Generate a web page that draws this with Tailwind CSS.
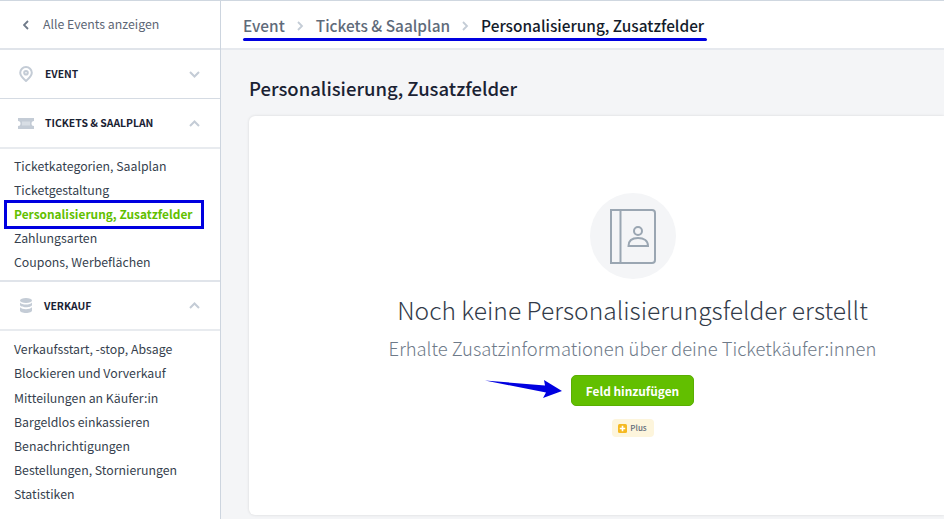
<!DOCTYPE html>
<html lang="de">
<head>
<meta charset="utf-8">
<script src="https://cdn.jsdelivr.net/npm/@tailwindcss/browser@4"></script>
</head>
<body class="relative w-[944px] h-[519px] overflow-hidden bg-[#f4f5f7] font-['Noto_Sans_CJK_SC','Source_Sans_Pro',sans-serif] text-[#1a2233]">
<div class="flex h-[519px] border-t border-[#cfd7e0]">
  <aside class="w-[221px] shrink-0 h-full bg-white border-r border-[#cdd5df] text-[12.3px]">
    <div class="h-[49px] flex items-center pl-[23px] gap-[14px] border-b-2 border-[#e0e4ea] text-[#5c6675]">
      <svg class="w-[6px] h-[10px]" viewBox="0 0 6 10" fill="none" stroke="#6f7a89" stroke-width="1.8"><path d="M5 1 1 5l4 4"/></svg>
      <span>Alle Events anzeigen</span>
    </div>
    <div class="h-[49px] flex items-center pl-[19px] pr-[20px] border-b border-[#d5dbe3]">
      <svg class="w-[14px] h-[16px]" viewBox="0 0 14 16" fill="none" stroke="#c4ccd6" stroke-width="2"><path d="M7 15C3.500 12 1.200 9.500 1.200 6.800a5.800 5.800 0 0 1 11.600 0C12.800 9.500 10.500 12 7 15Z"/><circle cx="7" cy="6.800" r="1.800"/></svg>
      <span class="ml-[12px] text-[10.3px] font-semibold flex-1">EVENT</span>
      <svg class="w-[11px] h-[7px]" viewBox="0 0 11 7" fill="none" stroke="#c4ccd6" stroke-width="2"><path d="m1 1 4.500 4.500L10 1"/></svg>
    </div>
    <div class="h-[50px] flex items-center pl-[18px] pr-[20px] border-b-2 border-[#e8ebef]">
      <svg class="w-[16px] h-[11px]" viewBox="0 0 16 11" fill="#c4ccd6"><path d="M0 0h16v3a2.500 2.500 0 0 0 0 5v3H0V8a2.500 2.500 0 0 0 0-5Z"/><path d="M4 3.500h8v4H4z" fill="#d8dee5"/></svg>
      <span class="ml-[11px] text-[10.4px] font-semibold flex-1">TICKETS &amp; SAALPLAN</span>
      <svg class="w-[11px] h-[7px]" viewBox="0 0 11 7" fill="none" stroke="#c4ccd6" stroke-width="2"><path d="m1 6 4.500-4.500L10 6"/></svg>
    </div>
    <ul class="pl-[14px] pt-[5px] h-[133px] text-[#363f4e] leading-[24px] border-b-2 border-[#e0e4ea]">
      <li>Ticketkategorien, Saalplan</li>
      <li>Ticketgestaltung</li>
      <li class="text-[#62bf00] font-semibold text-[11.9px]">Personalisierung, Zusatzfelder</li>
      <li>Zahlungsarten</li>
      <li>Coupons, Werbeflächen</li>
    </ul>
    <div class="h-[49px] flex items-center pl-[20px] pr-[20px] border-b-2 border-[#e8ebef]">
      <svg class="w-[12px] h-[15px]" viewBox="0 0 12 15" fill="#c4ccd6"><ellipse cx="6" cy="2.500" rx="6" ry="2.500"/><path d="M0 4.500c1 1.400 3.500 2 6 2s5-.6 6-2V7c0 1.200-2.700 2.300-6 2.300S0 8.200 0 7Zm0 4.800c1 1.300 3.500 2 6 2s5-.7 6-2v3.200c0 1.400-2.700 2.500-6 2.500s-6-1.100-6-2.500Z"/></svg>
      <span class="ml-[12px] text-[10.4px] font-semibold flex-1">VERKAUF</span>
      <svg class="w-[11px] h-[7px]" viewBox="0 0 11 7" fill="none" stroke="#c4ccd6" stroke-width="2"><path d="m1 6 4.500-4.500L10 6"/></svg>
    </div>
    <ul class="pl-[14px] pt-[6px] text-[#363f4e] leading-[24px]">
      <li>Verkaufsstart, -stop, Absage</li>
      <li>Blockieren und Vorverkauf</li>
      <li class="pt-[1px]">Mitteilungen an Käufer:in</li>
      <li>Bargeldlos einkassieren</li>
      <li>Benachrichtigungen</li>
      <li>Bestellungen, Stornierungen</li>
      <li>Statistiken</li>
    </ul>
  </aside>
  <main class="flex-1 min-w-0">
    <nav class="h-[49px] bg-white border-b-2 border-[#e6e9ee] flex items-center pl-[22px] pt-[2px] text-[15.4px] font-medium">
      <span class="text-[#5f6b7a]">Event</span>
      <svg class="w-[7px] h-[10px] ml-[12px] mr-[12px]" viewBox="0 0 7 10" fill="none" stroke="#c4ccd6" stroke-width="1.800"><path d="m1 1 4 4-4 4"/></svg>
      <span class="text-[#5f6b7a]">Tickets &amp; Saalplan</span>
      <svg class="w-[7px] h-[10px] ml-[12px] mr-[12px]" viewBox="0 0 7 10" fill="none" stroke="#c4ccd6" stroke-width="1.800"><path d="m1 1 4 4-4 4"/></svg>
      <span class="text-[#141c2b]">Personalisierung, Zusatzfelder</span>
    </nav>
    <div class="pl-[27px]">
      <section class="w-[696px]">
        <h1 class="h-[66px] flex items-center pt-[12px] pl-[1px] text-[18.5px] font-medium text-[#1a2233]">Personalisierung, Zusatzfelder</h1>
        <div class="ml-[1px] h-[399px] bg-white rounded-l-[6px] shadow-[0_0_3px_rgba(0,0,0,0.12)] flex flex-col items-center pt-[77px] pl-[72px]">
          <div class="w-[86px] h-[86px] rounded-full bg-[#f4f5f7] flex items-center justify-center">
            <svg class="w-[46px] h-[55px]" viewBox="0 0 46 55" fill="none" stroke="#9aa6b2" stroke-width="2"><path d="M1 1h41a3 3 0 0 1 3 3v47a3 3 0 0 1-3 3H1Z"/><path d="M10.500 1v53"/><circle cx="28" cy="22" r="4"/><path d="M18.500 37c0-5 3.500-8 9.500-8s10 3 10 8Z"/></svg>
          </div>
          <h2 class="mt-[12px] text-[24.6px] leading-[36px] font-light text-[#323b49]">Noch keine Personalisierungsfelder erstellt</h2>
          <p class="mt-[7px] text-[18.4px] leading-[28px] font-light text-[#6e7a89]">Erhalte Zusatzinformationen über deine Ticketkäufer:innen</p>
          <button class="mt-[13px] w-[123px] h-[31px] rounded-[5px] bg-[#62bf00] border border-[#5aae02] text-white text-[11.9px] font-semibold">Feld hinzufügen</button>
          <span class="mt-[13px] h-[18px] w-[42px] rounded-[4px] bg-[#fdf5dc] flex items-center justify-center gap-[3px] text-[8px] font-medium text-[#5f6b7a]">
            <svg class="w-[9px] h-[9px]" viewBox="0 0 9 9"><rect width="9" height="9" rx="1.500" fill="#f5b921"/><path d="M4.500 1.800v5.400M1.800 4.500h5.400" stroke="#fff" stroke-width="1.600"/></svg>Plus
          </span>
        </div>
      </section>
    </div>
  </main>
</div>
<!-- annotations -->
<div class="absolute left-[4px] top-[200px] w-[200px] h-[29px] border-[3px] border-[#0000e0]"></div>
<div class="absolute left-[243px] top-[38px] w-[464px] h-[3px] rounded-full bg-[#0000e0]"></div>
<svg class="absolute left-[484px] top-[377px] w-[80px] h-[24px]" viewBox="0 0 80 24"><path d="M1 3.500 61 8.500 60 3 78 14 59 21 62 15.500Z" fill="#0000e0"/></svg>
</body>
</html>
